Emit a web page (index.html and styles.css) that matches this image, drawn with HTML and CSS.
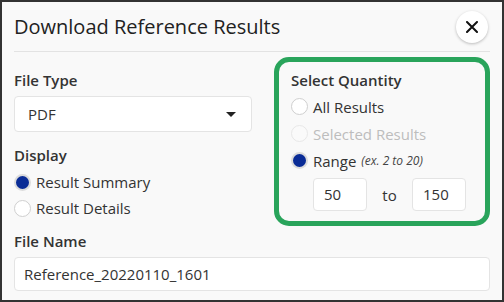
FILE: index.html
```html
<!DOCTYPE html>
<html lang="en">
<head>
  <meta charset="UTF-8">
  <title>Download Reference Results</title>
  <link rel="stylesheet" href="styles.css">
</head>
<body>
<div class="dialog">
  <div class="header">
    <h2 class="title">Download Reference Results</h2>
    <button class="close" aria-label="Close">
      <svg width="12" height="12" viewBox="0 0 12 12"><path d="M1 1 L11 11 M11 1 L1 11" stroke="#111" stroke-width="2" stroke-linecap="round"/></svg>
    </button>
  </div>
  <div class="content">
    <div class="row">
      <div class="col-left">
        <label class="label">File Type</label>
        <div class="select">
          <span>PDF</span>
          <span class="caret"></span>
        </div>
        <label class="label label-display">Display</label>
        <div class="radio"><span class="dot checked"></span>Result Summary</div>
        <div class="radio"><span class="dot"></span>Result Details</div>
      </div>
      <div class="quantity">
        <label class="label">Select Quantity</label>
        <div class="radio qrow"><span class="dot"></span>All Results</div>
        <div class="radio qrow disabled"><span class="dot"></span>Selected Results</div>
        <div class="radio qrow"><span class="dot checked"></span>Range <em class="hint">(ex. 2 to 20)</em></div>
        <div class="range">
          <div class="num">50</div>
          <span class="to">to</span>
          <div class="num">150</div>
        </div>
      </div>
    </div>
    <label class="label label-name">File Name</label>
    <div class="input">Reference_20220110_1601</div>
  </div>
</div>
</body>
</html>
```

FILE: styles.css
```css
html,
body {
  margin: 0;
  padding: 0;
  font-family: 'Open Sans', sans-serif;
  color: #333;
}
.dialog {
  box-sizing: border-box;
  width: 504px;
  height: 302px;
  border: 2px solid #333;
  background-color: #f9f9f9;
}
.header {
  display: flex;
  justify-content: space-between;
  align-items: center;
  height: 49px;
  margin: 0 12px;
  border-bottom: 1px solid #e3e3e3;
}
.title {
  margin: 0;
  font-size: 20px;
  font-weight: 400;
  color: #222;
}
.close {
  display: flex;
  align-items: center;
  justify-content: center;
  width: 32px;
  height: 32px;
  margin-right: 2px;
  padding: 0;
  border: none;
  border-radius: 50%;
  background: #fff;
  box-shadow: 0 1px 3px rgba(0, 0, 0, 0.25);
}
.content {
  padding: 5px 12px 0;
}
.row {
  display: flex;
  gap: 22px;
}
.col-left {
  display: flex;
  flex-direction: column;
  width: 238px;
  padding-top: 12px;
}
.label {
  display: block;
  font-size: 15px;
  line-height: 22px;
  font-weight: 600;
  color: #333;
}
.select {
  box-sizing: border-box;
  display: flex;
  justify-content: space-between;
  align-items: center;
  height: 36px;
  margin-top: 5px;
  padding: 0 15px 0 13px;
  background: #fff;
  border: 1px solid #e4e4e4;
  border-radius: 4px;
  font-size: 15px;
}
.caret {
  width: 0;
  height: 0;
  border-left: 5px solid transparent;
  border-right: 5px solid transparent;
  border-top: 5px solid #222;
}
.label-display {
  margin-top: 12px;
  margin-bottom: 3px;
}
.radio {
  display: flex;
  align-items: center;
  height: 26px;
  font-size: 15px;
  color: #333;
}
.dot {
  box-sizing: border-box;
  width: 17px;
  height: 17px;
  margin-right: 5px;
  border-radius: 50%;
  background: #fff;
  border: 1px solid #cfcfcf;
}
.dot.checked {
  background: #0a2c96;
  border: 2px solid #dcdcdc;
}
.disabled {
  color: #bdbdbd;
}
.disabled .dot {
  border-color: #e8e8e8;
  background: #fafafa;
}
.quantity {
  box-sizing: border-box;
  width: 216px;
  height: 169px;
  padding: 7px 12px 0;
  border: 5px solid #29a45b;
  border-radius: 15px;
}
.qrow {
  height: 27px;
}
.quantity .label {
  margin-bottom: 2px;
}
.hint {
  margin-left: 5px;
  font-size: 12px;
  color: #444;
}
.range {
  display: flex;
  align-items: center;
  margin: 4px 0 0 22px;
}
.num {
  box-sizing: border-box;
  width: 54px;
  height: 33px;
  padding-left: 10px;
  line-height: 31px;
  font-size: 15px;
  background: #fff;
  border: 1px solid #e4e4e4;
  border-radius: 4px;
}
.to {
  width: 45px;
  text-align: center;
  font-size: 15px;
}
.label-name {
  margin-top: 4px;
}
.input {
  box-sizing: border-box;
  height: 34px;
  margin-top: 5px;
  padding-left: 9px;
  line-height: 32px;
  font-size: 15px;
  background: #fff;
  border: 1px solid #e4e4e4;
  border-radius: 4px;
}
```
